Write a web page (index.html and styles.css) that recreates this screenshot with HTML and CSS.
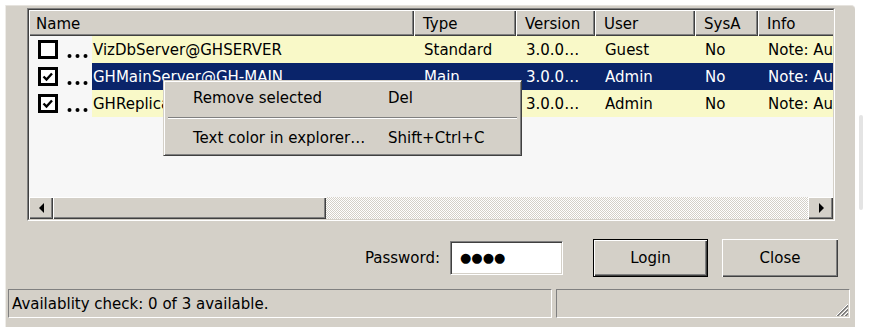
FILE: index.html
```html
<!DOCTYPE html>
<html>
<head>
<meta charset="utf-8">
<link rel="stylesheet" href="styles.css">
</head>
<body>
<div class="screen">
  <div class="window">
    <div class="listbox">
      <div class="listinner">
        <div class="header">
          <div class="hcell hname">Name</div>
          <div class="hcell">Type</div>
          <div class="hcell">Version</div>
          <div class="hcell">User</div>
          <div class="hcell">SysA</div>
          <div class="hcell">Info</div>
        </div>
        <div class="row">
          <div class="chk">
            <svg class="box" width="20" height="19" viewBox="0 0 20 19"><rect x="1.5" y="1.5" width="17" height="16" fill="#fff" stroke="#000" stroke-width="3"/></svg>
            <svg class="dots" width="22" height="6" viewBox="0 0 22 6"><circle cx="2.5" cy="3" r="2"/><circle cx="10.5" cy="3" r="2"/><circle cx="18.5" cy="3" r="2"/></svg>
          </div>
          <div class="cell cname">VizDbServer@GHSERVER</div>
          <div class="cell">Standard</div>
          <div class="cell">3.0.0…</div>
          <div class="cell">Guest</div>
          <div class="cell">No</div>
          <div class="cell">Note: Automatic login</div>
        </div>
        <div class="row selected">
          <div class="chk">
            <svg class="box" width="20" height="19" viewBox="0 0 20 19"><rect x="1.5" y="1.5" width="17" height="16" fill="#fff" stroke="#000" stroke-width="3"/><path d="M5.5 9.5 L8.5 12.5 L14 6.5" fill="none" stroke="#000" stroke-width="2.4"/></svg>
            <svg class="dots" width="22" height="6" viewBox="0 0 22 6"><circle cx="2.5" cy="3" r="2"/><circle cx="10.5" cy="3" r="2"/><circle cx="18.5" cy="3" r="2"/></svg>
          </div>
          <div class="cell cname">GHMainServer@GH-MAIN</div>
          <div class="cell">Main</div>
          <div class="cell">3.0.0…</div>
          <div class="cell">Admin</div>
          <div class="cell">No</div>
          <div class="cell">Note: Automatic login</div>
        </div>
        <div class="row">
          <div class="chk">
            <svg class="box" width="20" height="19" viewBox="0 0 20 19"><rect x="1.5" y="1.5" width="17" height="16" fill="#fff" stroke="#000" stroke-width="3"/><path d="M5.5 9.5 L8.5 12.5 L14 6.5" fill="none" stroke="#000" stroke-width="2.4"/></svg>
            <svg class="dots" width="22" height="6" viewBox="0 0 22 6"><circle cx="2.5" cy="3" r="2"/><circle cx="10.5" cy="3" r="2"/><circle cx="18.5" cy="3" r="2"/></svg>
          </div>
          <div class="cell cname">GHReplicaServer@GH-REPL</div>
          <div class="cell">Replica</div>
          <div class="cell">3.0.0…</div>
          <div class="cell">Admin</div>
          <div class="cell">No</div>
          <div class="cell">Note: Automatic login</div>
        </div>
        <div class="empty"></div>
        <div class="hscroll">
          <div class="sbtn"><span class="arrow-left"></span></div>
          <div class="thumb"></div>
          <div class="track"></div>
          <div class="sbtn"><span class="arrow-right"></span></div>
        </div>
        <div class="menu">
          <div class="mi"><span class="mlabel">Remove selected</span><span>Del</span></div>
          <div class="msep"></div>
          <div class="mi"><span class="mlabel">Text color in explorer…</span><span>Shift+Ctrl+C</span></div>
        </div>
      </div>
    </div>
    <div class="actions">
      <span class="plabel">Password:</span>
      <div class="pinput">●●●●</div>
      <button class="btn default">Login</button>
      <button class="btn close">Close</button>
    </div>
    <div class="statusbar">
      <div class="panel p1">Availablity check: 0 of 3 available.</div>
      <div class="panel p2">
        <svg class="grip" width="16" height="16" viewBox="0 0 16 16">
          <path d="M15 3 L3 15" stroke="#fff" stroke-width="1"/>
          <path d="M15 4 L4 15 M15 5 L5 15" stroke="#808080" stroke-width="1"/>
          <path d="M15 7 L7 15" stroke="#fff" stroke-width="1"/>
          <path d="M15 8 L8 15 M15 9 L9 15" stroke="#808080" stroke-width="1"/>
          <path d="M15 11 L11 15" stroke="#fff" stroke-width="1"/>
          <path d="M15 12 L12 15 M15 13 L13 15" stroke="#808080" stroke-width="1"/>
        </svg>
      </div>
    </div>
  </div>
  <div class="gutter"><div class="ghostbar"></div></div>
</div>
</body>
</html>
```
FILE: styles.css
```css
html, body {
  margin: 0;
  padding: 0;
  background: #ffffff;
}
body {
  width: 879px;
  height: 327px;
  overflow: hidden;
  font-family: "DejaVu Sans", Verdana, sans-serif;
  font-size: 15px;
  color: #000;
}
.screen {
  display: flex;
  height: 327px;
  box-sizing: border-box;
  padding: 5px 0 0 5px;
}
.window {
  width: 850px;
  box-sizing: border-box;
  background: #d4d0c8;
  border-left: 1px solid #eeece8;
  border-top: 1px solid #e6e3de;
  border-top-right-radius: 4px;
  padding-top: 2px;
  display: flex;
  flex-direction: column;
}
.listbox {
  margin-left: 21px;
  width: 808px;
  height: 213px;
  box-sizing: border-box;
  border: 1px solid;
  border-color: #808080 #ffffff #ffffff #808080;
}
.listinner {
  position: relative;
  height: 100%;
  box-sizing: border-box;
  border: 1px solid;
  border-color: #404040 #d4d0c8 #d4d0c8 #404040;
  background: #f7f7f7;
  overflow: hidden;
  display: flex;
  flex-direction: column;
}
.header {
  display: grid;
  grid-template-columns: 385px 102px 79px 100px 63px 120px;
  height: 26px;
  flex: none;
}
.hcell {
  background: #d4d0c8;
  box-shadow: inset 1px 1px 0 #ffffff, inset -1px -1px 0 #404040, inset -2px -2px 0 #808080;
  line-height: 24px;
  padding-top: 2px;
  padding-left: 9px;
  white-space: nowrap;
  overflow: hidden;
}
.hcell.hname {
  padding-left: 7px;
}
.row {
  display: grid;
  grid-template-columns: 63px 322px 102px 79px 100px 63px 120px;
  height: 27px;
  flex: none;
}
.chk {
  display: flex;
  align-items: center;
  padding-left: 9px;
}
.dots {
  margin-left: 9px;
  margin-top: 13px;
  fill: #000;
}
.cell {
  background: #f9f9c8;
  line-height: 25px;
  padding-top: 2px;
  padding-left: 10px;
  white-space: nowrap;
  overflow: hidden;
}
.cell.cname {
  padding-left: 1px;
}
.row.selected .cell {
  background: #0a246a;
  color: #ffffff;
}
.empty {
  flex: 1;
}
.hscroll {
  flex: none;
  height: 22px;
  display: flex;
}
.sbtn {
  width: 24px;
  background: #d4d0c8;
  box-shadow: inset 1px 1px 0 #ffffff, inset -1px -1px 0 #404040, inset -2px -2px 0 #808080;
  display: flex;
  align-items: center;
  justify-content: center;
}
.sbtn:last-child {
  width: 25px;
}
.arrow-left {
  width: 0;
  height: 0;
  border-top: 5px solid transparent;
  border-bottom: 5px solid transparent;
  border-right: 5px solid #000;
}
.arrow-right {
  width: 0;
  height: 0;
  border-top: 5px solid transparent;
  border-bottom: 5px solid transparent;
  border-left: 5px solid #000;
  margin-left: 2px;
}
.thumb {
  width: 273px;
  background: #d4d0c8;
  box-shadow: inset 1px 1px 0 #ffffff, inset -1px -1px 0 #404040, inset -2px -2px 0 #808080;
}
.track {
  flex: 1;
  background-color: #ffffff;
  background-image: repeating-conic-gradient(#d4d0c8 0 25%, #ffffff 0 50%);
  background-size: 2px 2px;
}
.menu {
  position: absolute;
  left: 134px;
  top: 70px;
  width: 359px;
  height: 76px;
  box-sizing: border-box;
  background: #d4d0c8;
  border: 1px solid;
  border-color: #d4d0c8 #404040 #404040 #d4d0c8;
  box-shadow: inset 1px 1px 0 #ffffff, inset -1px -1px 0 #808080;
  padding: 1px;
}
.mi {
  height: 32px;
  display: flex;
  align-items: center;
  padding-left: 28px;
  white-space: nowrap;
}
.mlabel {
  width: 195px;
}
.msep {
  height: 0;
  margin: 3px 3px;
  border-top: 1px solid #808080;
  border-bottom: 1px solid #ffffff;
}
.actions {
  margin-top: 18px;
  height: 38px;
  display: flex;
  align-items: center;
  justify-content: flex-end;
  padding-right: 17px;
  flex: none;
}
.plabel {
  margin-right: 10px;
}
.pinput {
  width: 113px;
  height: 34px;
  box-sizing: border-box;
  background: #ffffff;
  border: 1px solid;
  border-color: #808080 #ffffff #ffffff #808080;
  box-shadow: inset 1px 1px 0 #404040, inset -1px -1px 0 #d4d0c8;
  padding-left: 9px;
  font-size: 13px;
  line-height: 32px;
}
.btn {
  font-family: inherit;
  font-size: 15px;
  color: #000;
  background: #d4d0c8;
  height: 38px;
  box-sizing: border-box;
  padding: 0;
  border: none;
  box-shadow: inset 1px 1px 0 #ffffff, inset -1px -1px 0 #404040, inset -2px -2px 0 #808080;
}
.btn.default {
  width: 115px;
  margin-left: 30px;
  border: 1px solid #000;
}
.btn.close {
  width: 116px;
  margin-left: 14px;
}
.statusbar {
  margin-top: 12px;
  margin-left: 2px;
  height: 29px;
  display: flex;
  gap: 4px;
  flex: none;
}
.panel {
  box-sizing: border-box;
  border: 1px solid;
  border-color: #808080 #ffffff #ffffff #808080;
  line-height: 26px;
  padding-top: 1px;
  white-space: nowrap;
}
.p1 {
  width: 544px;
  padding-left: 3px;
}
.p2 {
  width: 294px;
  display: flex;
  justify-content: flex-end;
  align-items: flex-end;
}
.grip {
  display: block;
}
.gutter {
  flex: 1;
  padding: 110px 0 0 4px;
}
.ghostbar {
  width: 4px;
  height: 95px;
  background: #e4e4e4;
  border-radius: 2px;
}
```
